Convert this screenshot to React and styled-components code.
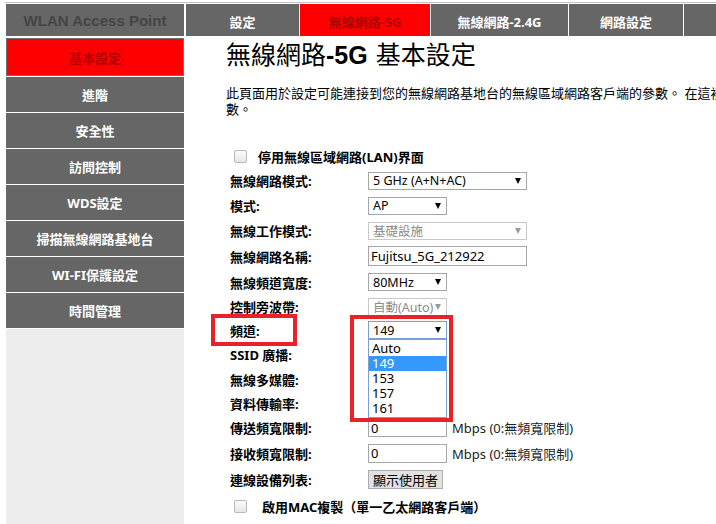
import styled, { createGlobalStyle } from "styled-components";

const GlobalStyle = createGlobalStyle`
  html, body {
    margin: 0;
    padding: 0;
    background: #fff;
    overflow: hidden;
  }
  body {
    font-family: "Noto Sans", "Noto Sans CJK TC", sans-serif;
    color: #000;
  }
`;

const Page = styled.div`
  width: 716px;
  height: 524px;
  overflow: hidden;
`;

const TopRule = styled.div`
  height: 1px;
  margin: 2px 0 0 5px;
  background: #c4c4c4;
`;

const Frame = styled.div`
  display: grid;
  grid-template-columns: 178px 900px;
  grid-template-rows: 32px auto;
  column-gap: 2px;
  row-gap: 2px;
  margin: 1px 0 0 6px;
`;

const Logo = styled.div`
  background: #666;
  color: #454545;
  display: flex;
  align-items: center;
  justify-content: center;
  font: bold 15px "Liberation Sans", Arial, sans-serif;
`;

const Tabs = styled.div`
  display: flex;
  gap: 1px;
`;

const Tab = styled.div`
  flex: none;
  width: ${(p) => p.$w}px;
  background: ${(p) => (p.$active ? "#ff0000" : "#666")};
  color: ${(p) => (p.$active ? "#b00000" : "#fff")};
  display: flex;
  align-items: center;
  justify-content: center;
  padding-top: 3px;
  box-sizing: border-box;
  font: bold 13px "Noto Sans", "Noto Sans CJK TC", sans-serif;
`;

const Sidebar = styled.div`
  display: flex;
  flex-direction: column;
  height: 486px;
`;

const NavList = styled.div`
  display: flex;
  flex-direction: column;
  gap: 1px;
  padding-bottom: 1px;
  background: #fff;
`;

const NavItem = styled.div`
  height: ${(p) => (p.$active ? 38 : 35)}px;
  box-sizing: border-box;
  background: ${(p) => (p.$active ? "#ff0000" : "#666")};
  border: ${(p) => (p.$active ? "1px solid #707070" : "none")};
  color: ${(p) => (p.$active ? "#b00000" : "#fff")};
  display: flex;
  align-items: center;
  justify-content: center;
  font: bold 13px "Noto Sans", "Noto Sans CJK TC", sans-serif;
`;

const NavFill = styled.div`
  flex: 1;
  background: #ededed;
`;

const Main = styled.div`
  padding-left: 40px;
`;

const Heading = styled.h1`
  margin: 0;
  font: normal 25px/30px "Noto Sans CJK TC", sans-serif;
  color: #000;
  white-space: nowrap;
`;

const HeadLatin = styled.span`
  font: bold 25px "Liberation Sans", Arial, sans-serif;
  margin-right: 8px;
`;

const Desc = styled.p`
  margin: 15px 0 0;
  font-size: 13px;
  line-height: 16px;
  white-space: nowrap;
`;

const Form = styled.div`
  margin-top: 27px;
  padding-left: 4px;
`;

const CheckRow = styled.div`
  display: flex;
  align-items: center;
  height: ${(p) => p.$h}px;
  gap: ${(p) => p.$gap}px;
  padding-left: 4px;
  font-weight: bold;
  font-size: 13px;
`;

const Checkbox = styled.span`
  width: 13px;
  height: 13px;
  box-sizing: border-box;
  border: 1px solid #b8b8b8;
  border-radius: 2px;
  background: linear-gradient(#fbfbfb, #e6e6e6);
`;

const Row = styled.div`
  position: relative;
  display: flex;
  align-items: center;
  height: ${(p) => p.$h}px;
`;

const Label = styled.div`
  width: 138px;
  flex: none;
  font-weight: bold;
  font-size: 13px;
`;

const Select = styled.div`
  position: relative;
  width: ${(p) => p.$w}px;
  height: 18px;
  box-sizing: border-box;
  border: 1px solid ${(p) => (p.$focus ? "#7a9fd0" : p.$disabled ? "#c8c8c8" : "#a6a6a6")};
  background: #fff;
  display: flex;
  align-items: center;
  justify-content: space-between;
  padding: 0 5px 0 4px;
  font-size: 12.5px;
  color: ${(p) => (p.$disabled ? "#8a8a8a" : "#000")};
`;

const Arrow = styled.span`
  width: 0;
  height: 0;
  border-left: 3.5px solid transparent;
  border-right: 3.5px solid transparent;
  border-top: 6px solid ${(p) => (p.$disabled ? "#9a9a9a" : "#000")};
`;

const TextInput = styled.div`
  width: ${(p) => p.$w}px;
  height: ${(p) => p.$h}px;
  box-sizing: border-box;
  border: 1px solid #a6a6a6;
  display: flex;
  align-items: center;
  padding-left: 2px;
  font-size: 13px;
`;

const Unit = styled.span`
  margin-left: 5px;
  font-size: 13px;
  color: #222;
`;

const Button = styled.div`
  width: 75px;
  height: 19px;
  box-sizing: border-box;
  border: 1px solid #adadad;
  background: #e1e1e1;
  display: flex;
  align-items: center;
  justify-content: center;
  font-size: 13px;
`;

const DropList = styled.div`
  position: absolute;
  left: -1px;
  top: 17px;
  width: 79px;
  box-sizing: border-box;
  border: 1px solid #7a9fd0;
  background: #fff;
  padding: 1px 0;
  z-index: 2;
`;

const Option = styled.div`
  height: 15px;
  line-height: 15px;
  padding-left: 3px;
  font-size: 13px;
  background: ${(p) => (p.$selected ? "#3399ff" : "#fff")};
  color: ${(p) => (p.$selected ? "#fff" : "#000")};
`;

const Marker = styled.div`
  position: absolute;
  left: ${(p) => p.$x}px;
  top: ${(p) => p.$y}px;
  width: ${(p) => p.$w}px;
  height: ${(p) => p.$h}px;
  box-sizing: border-box;
  border: 4px solid #e8222b;
  z-index: 3;
  pointer-events: none;
`;

const tabs = [
  { label: "設定", w: 113 },
  { label: "無線網路-5G", w: 130, active: true },
  { label: "無線網路-2.4G", w: 137 },
  { label: "網路設定", w: 114 },
  { label: "管理", w: 130 },
];

const nav = [
  "基本設定",
  "進階",
  "安全性",
  "訪問控制",
  "WDS設定",
  "掃描無線網路基地台",
  "WI-FI保護設定",
  "時間管理",
];

function Sel({ w, value, disabled, focus, children }) {
  return (
    <Select $w={w} $disabled={disabled} $focus={focus}>
      <span>{value}</span>
      <Arrow $disabled={disabled} />
      {children}
    </Select>
  );
}

export default function App() {
  return (
    <Page>
      <GlobalStyle />
      <TopRule />
      <Frame>
        <Logo>WLAN Access Point</Logo>
        <Tabs>
          {tabs.map((t) => (
            <Tab key={t.label} $w={t.w} $active={t.active}>
              {t.label}
            </Tab>
          ))}
        </Tabs>
        <Sidebar>
          <NavList>
            {nav.map((n, i) => (
              <NavItem key={n} $active={i === 0}>
                {n}
              </NavItem>
            ))}
          </NavList>
          <NavFill />
        </Sidebar>
        <Main>
          <Heading>
            無線網路<HeadLatin>-5G</HeadLatin>基本設定
          </Heading>
          <Desc>
            此頁面用於設定可能連接到您的無線網路基地台的無線區域網路客戶端的參數。 在這裡您可以變更無線加密設定及無線網路參
            <br />
            數。
          </Desc>
          <Form>
            <CheckRow $h={24} $gap={11}>
              <Checkbox />
              停用無線區域網路(LAN)界面
            </CheckRow>
            <Row $h={25}>
              <Label>無線網路模式:</Label>
              <Sel w={159} value="5 GHz (A+N+AC)" />
            </Row>
            <Row $h={25}>
              <Label>模式:</Label>
              <Sel w={79} value="AP" />
            </Row>
            <Row $h={25}>
              <Label>無線工作模式:</Label>
              <Sel w={159} value="基礎設施" disabled />
            </Row>
            <Row $h={26}>
              <Label>無線網路名稱:</Label>
              <TextInput $w={159} $h={20}>Fujitsu_5G_212922</TextInput>
            </Row>
            <Row $h={26}>
              <Label>無線頻道寬度:</Label>
              <Sel w={79} value="80MHz" />
            </Row>
            <Row $h={23}>
              <Label>控制旁波帶:</Label>
              <Sel w={79} value="自動(Auto)" disabled />
            </Row>
            <Row $h={24}>
              <Marker $x={-19} $y={-4} $w={86} $h={32} />
              <Label>頻道:</Label>
              <Sel w={79} value="149" focus>
                <DropList>
                  {["Auto", "149", "153", "157", "161"].map((o) => (
                    <Option key={o} $selected={o === "149"}>
                      {o}
                    </Option>
                  ))}
                </DropList>
              </Sel>
              <Marker $x={120} $y={-3} $w={103} $h={107} />
            </Row>
            <Row $h={25}>
              <Label>SSID 廣播:</Label>
            </Row>
            <Row $h={24}>
              <Label>無線多媒體:</Label>
            </Row>
            <Row $h={24}>
              <Label>資料傳輸率:</Label>
            </Row>
            <Row $h={25}>
              <Label>傳送頻寬限制:</Label>
              <TextInput $w={79} $h={19}>0</TextInput>
              <Unit>Mbps (0:無頻寬限制)</Unit>
            </Row>
            <Row $h={26}>
              <Label>接收頻寬限制:</Label>
              <TextInput $w={79} $h={19}>0</TextInput>
              <Unit>Mbps (0:無頻寬限制)</Unit>
            </Row>
            <Row $h={26}>
              <Label>連線設備列表:</Label>
              <Button>顯示使用者</Button>
            </Row>
            <CheckRow $h={29} $gap={15}>
              <Checkbox />
              啟用MAC複製（單一乙太網路客戶端）
            </CheckRow>
          </Form>
        </Main>
      </Frame>
    </Page>
  );
}
